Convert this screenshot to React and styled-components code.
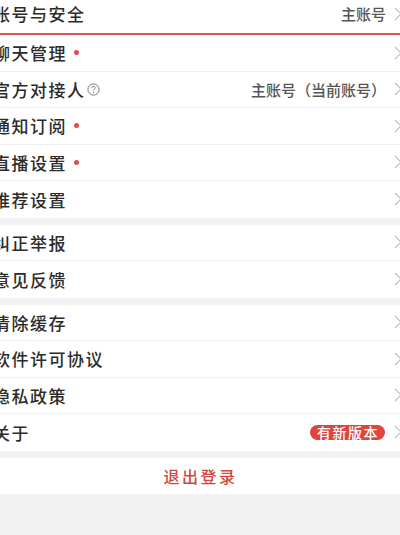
import styled, { createGlobalStyle } from "styled-components";

const GlobalStyle = createGlobalStyle`
  html, body {
    margin: 0;
    padding: 0;
    background: #f2f2f2;
    overflow: hidden;
  }
  body {
    font-family: "Noto Sans CJK SC", "Noto Sans", sans-serif;
  }
`;

const groups = [
  [
    { label: "聊天管理", dot: true },
    { label: "官方对接人", help: true, value: "主账号（当前账号）" },
    { label: "通知订阅", dot: true },
    { label: "直播设置", dot: true },
    { label: "推荐设置" },
  ],
  [{ label: "纠正举报" }, { label: "意见反馈" }],
  [
    { label: "清除缓存" },
    { label: "软件许可协议" },
    { label: "隐私政策" },
    { label: "关于", badge: "有新版本" },
  ],
];

const Chevron = () => (
  <svg width="8" height="14" viewBox="0 0 8 14">
    <polyline points="1,1 7,7 1,13" fill="none" stroke="#bdbdbd" strokeWidth="1.2" />
  </svg>
);

const HelpIcon = () => (
  <svg width="13" height="13" viewBox="0 0 13 13">
    <circle cx="6.5" cy="6.5" r="5.6" fill="none" stroke="#777" strokeWidth="1" />
    <path
      d="M4.7 5.1 C4.7 3.9 5.5 3.3 6.5 3.3 C7.5 3.3 8.3 4 8.3 4.9 C8.3 6 6.6 6.2 6.6 7.6"
      fill="none"
      stroke="#777"
      strokeWidth="1"
    />
    <circle cx="6.6" cy="9.4" r="0.6" fill="#777" />
  </svg>
);

const App = () => (
  <>
    <GlobalStyle />
    <Page>
      <Group>
        <Row $accent>
          <Label>账号与安全</Label>
          <Spacer />
          <Value>主账号</Value>
          <Chevron />
        </Row>
        {groups[0].map((item) => (
          <Item key={item.label} {...item} />
        ))}
      </Group>
      {groups.slice(1).map((g, i) => (
        <Group key={i}>
          {g.map((item) => (
            <Item key={item.label} {...item} />
          ))}
        </Group>
      ))}
      <Group>
        <Logout>退出登录</Logout>
      </Group>
    </Page>
  </>
);

const Item = ({ label, dot, help, value, badge }) => (
  <Row>
    <Label>{label}</Label>
    {help && <HelpIcon />}
    {dot && <Dot />}
    <Spacer />
    {value && <Value>{value}</Value>}
    {badge && <Badge>{badge}</Badge>}
    <Chevron />
  </Row>
);

const Page = styled.main`
  display: flex;
  flex-direction: column;
  gap: 7px;
  margin: -6px -8px 0 -7px;
`;

const Group = styled.section`
  display: flex;
  flex-direction: column;
  background: #fff;
`;

const Row = styled.div`
  display: flex;
  align-items: center;
  box-sizing: border-box;
  height: ${({ $accent }) => ($accent ? "41px" : "36.5px")};
  padding: 0 6px 0 0;
  border-bottom: ${({ $accent }) => ($accent ? "2px solid #d9574e" : "1px solid #efefef")};
  &:last-child {
    border-bottom: ${({ $accent }) => ($accent ? "2px solid #d9574e" : "none")};
  }
  svg {
    flex-shrink: 0;
  }
`;

const Spacer = styled.span`
  flex: 1;
`;

const Label = styled.span`
  font-size: 17px;
  font-weight: 500;
  letter-spacing: 1.5px;
  color: #2b2b2b;
  margin-right: 1px;
`;

const Dot = styled.span`
  width: 5px;
  height: 5px;
  border-radius: 50%;
  background: #e5484d;
  margin-left: 6px;
`;

const Value = styled.span`
  margin-right: 8px;
  font-size: 15px;
  font-weight: 500;
  color: #555;
`;

const Badge = styled.span`
  margin-right: 9px;
  padding: 0 6px 0 7px;
  height: 15px;
  line-height: 15px;
  border-radius: 8px;
  background: #e0443e;
  color: #fff;
  font-size: 14px;
  font-weight: 500;
  letter-spacing: 1.5px;
`;

const Logout = styled.div`
  height: 36px;
  display: flex;
  align-items: center;
  justify-content: center;
  font-size: 16px;
  font-weight: 500;
  letter-spacing: 2.5px;
  color: #d0473d;
`;

export default App;
